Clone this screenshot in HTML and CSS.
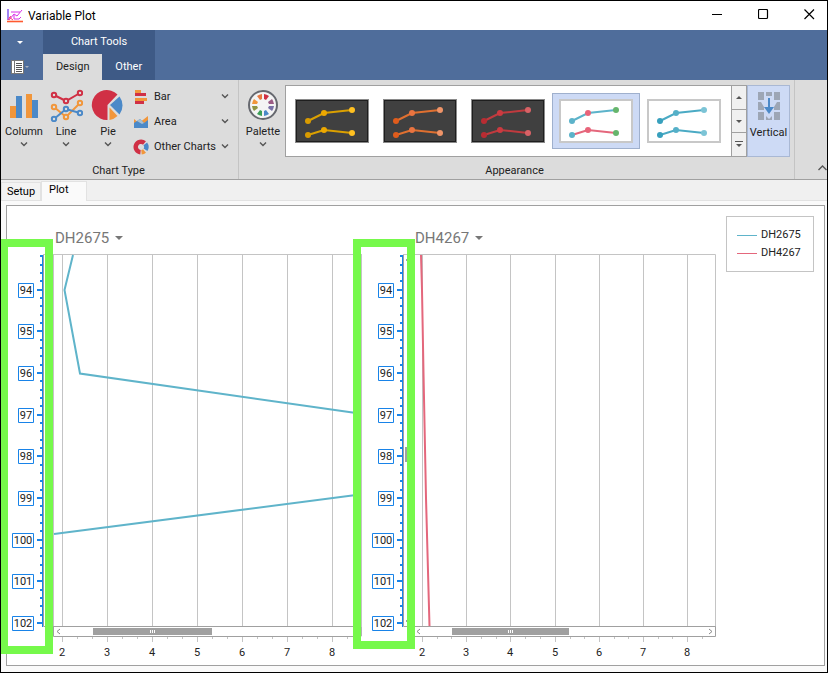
FILE: index.html
```html
<!DOCTYPE html>
<html lang="en">
<head>
<meta charset="utf-8">
<title>Variable Plot</title>
<link rel="stylesheet" href="styles.css">
</head>
<body>
<div class="window">
  <header class="titlebar">
    <svg class="app-icon" width="16" height="14" viewBox="0 0 16 14" fill="none">
      <path d="M1 0v11" stroke="#7a4ff0" stroke-width="1.4"/>
      <path d="M0 12.5h16" stroke="#ff5a30" stroke-width="1.6"/>
      <path d="M2 11L7 5l3 2 5-6M4 3h9M7 6v4h5l2-2" stroke="#d832e8"/>
      <path d="M2 8l4 3M1 11l3-4" stroke="#ff3c78"/>
    </svg>
    <h1 class="title">Variable Plot</h1>
    <div class="window-controls">
      <button aria-label="Minimize"><svg width="11" height="11"><path d="M0 5.5h10" stroke="#000"/></svg></button>
      <button aria-label="Maximize"><svg width="11" height="11"><rect x=".5" y=".5" width="9" height="9" rx="1" fill="none" stroke="#000" stroke-width="1.2"/></svg></button>
      <button aria-label="Close"><svg width="11" height="11"><path d="M.5.5l9.500 9.500M10 .5L.5 10" stroke="#000" stroke-width="1.2"/></svg></button>
    </div>
  </header>

  <nav class="ribbon-head">
    <div class="quick">
      <button aria-label="Customize"><svg width="6" height="3"><path d="M0 0h6L3 3z" fill="#fff"/></svg></button>
      <button aria-label="File menu"><svg width="19" height="14" viewBox="0 0 19 14"><rect x=".5" y=".5" width="12" height="13" fill="#fff" stroke="#777"/><path d="M3.500 1v12" stroke="#777"/><path d="M5 3.500h6M5 5.500h6M5 7.500h6M5 9.500h6M5 11.500h6" stroke="#555"/><path d="M14 6h4l-2 2z" fill="#a8b0bd"/></svg></button>
    </div>
    <div class="tools">
      <div class="tools-title">Chart Tools</div>
      <div class="tools-tabs">
        <button class="tab active">Design</button>
        <button class="tab">Other</button>
      </div>
    </div>
  </nav>

  <section class="ribbon">
    <div class="group chart-type">
      <div class="items">
        <button class="big">
          <svg width="34" height="34" viewBox="7 88 34 34"><path d="M10 106h6v12h-6zM26 94h6v24h-6z" fill="#f1963b"/><path d="M16 96h6v22h-6zM32 100h6v18h-6z" fill="#4b89c8"/></svg>
          <span>Column</span><svg class="chev" width="8" height="5"><path d="M1 .5l3 3 3-3"/></svg>
        </button>
        <button class="big">
          <svg width="34" height="34" viewBox="49 88 34 34" fill="#dcdcdc" stroke-width="2"><g stroke="#d03045"><path d="M54 95l12 6 14-8" fill="none"/><circle cx="54" cy="95" r="2.200"/><circle cx="66" cy="101" r="2.200"/><circle cx="80" cy="93" r="2.200"/></g><g stroke="#f1963b"><path d="M54 107l12 10 14-14" fill="none"/><circle cx="54" cy="107" r="2.200"/><circle cx="66" cy="117" r="2.200"/><circle cx="80" cy="103" r="2.200"/></g><g stroke="#4b89c8"><path d="M54 119l12-10 14 4" fill="none"/><circle cx="54" cy="119" r="2.200"/><circle cx="66" cy="109" r="2.200"/><circle cx="80" cy="113" r="2.200"/></g></svg>
          <span>Line</span><svg class="chev" width="8" height="5"><path d="M1 .5l3 3 3-3"/></svg>
        </button>
        <button class="big">
          <svg width="34" height="34" viewBox="91 88 34 34"><path d="M107.500 120A15 15 0 1 1 117.500 94.500L107.500 105z" fill="#d03045"/><path d="M119.500 96.500a15 15 0 0 1 0 18L110 105z" fill="#4b89c8"/><path d="M109.500 120v-12.500l8 8.500a15 15 0 0 1-8 4z" fill="#f1963b"/></svg>
          <span>Pie</span><svg class="chev" width="8" height="5"><path d="M1 .5l3 3 3-3"/></svg>
        </button>
        <div class="smalls">
          <button class="small"><svg width="16" height="16"><path d="M2 1h6v3H2zM2 9h12v3H2z" fill="#f1963b"/><path d="M2 4h11v3H2zM2 12h9v3H2z" fill="#d03045"/></svg><span>Bar</span><svg class="chev" width="8" height="5"><path d="M1 .5l3 3 3-3"/></svg></button>
          <button class="small"><svg width="16" height="16"><path d="M1 5l5 4 9-7v8H1z" fill="#f1963b"/><path d="M1 9l6-4 4 4 4-3v8H1z" fill="#4b89c8"/><path d="M4 7l3-2 4 4-2 1z" fill="#a9bfd0"/></svg><span>Area</span><svg class="chev" width="8" height="5"><path d="M1 .5l3 3 3-3"/></svg></button>
          <button class="small"><svg width="16" height="16" fill="none" stroke-width="4.500"><path d="M7.500 13.300A5.300 5.300 0 1 1 11.500 4" stroke="#d03045"/><path d="M12.300 4.800a5.300 5.300 0 0 1 .2 6" stroke="#4b89c8"/><path d="M11.500 12a5.300 5.300 0 0 1-3 1.300" stroke="#f1963b"/></svg><span>Other Charts</span><svg class="chev" width="8" height="5"><path d="M1 .5l3 3 3-3"/></svg></button>
        </div>
      </div>
      <div class="caption">Chart Type</div>
    </div>

    <div class="group appearance">
      <div class="items">
        <button class="big palette">
          <svg width="34" height="34" viewBox="-17 -17 34 34"><circle r="14" fill="#f4f4f4" stroke="#66686f" stroke-width="2"/><g><path d="M1 -6V-11A11 11 0 0 1 6 -9L3 -5z" fill="#d03045"/><path d="M5 -3L9 -6A11 11 0 0 1 11 -1H6z" fill="#9b5b85"/><path d="M6 1H11A11 11 0 0 1 9 6L5 3z" fill="#7a72a8"/><path d="M3 5L6 9A11 11 0 0 1 1 11V6z" fill="#4b89c8"/><path d="M-1 6V11A11 11 0 0 1 -6 9L-3 5z" fill="#3c9f58"/><path d="M-5 3L-9 6A11 11 0 0 1 -11 1H-6z" fill="#8f9443"/><path d="M-6 -1H-11A11 11 0 0 1 -9 -6L-5 -3z" fill="#f1963b"/><path d="M-3 -5L-6 -9A11 11 0 0 1 -1 -11V-6z" fill="#e9793f"/></g></svg>
          <span>Palette</span><svg class="chev" width="8" height="5"><path d="M1 .5l3 3 3-3"/></svg>
        </button>
        <div class="gallery">
          <div class="styles">
            <button class="style amber" aria-label="Amber dark"><svg viewBox="0 0 74 44"><rect class="edge" x=".5" y=".5" width="73" height="43"/><rect class="card dark" x="1.500" y="1.500" width="71" height="41"/><path class="ln" d="M13 22l16-8 28-3M13 36l16-5 28 3"/><g class="p1"><circle cx="13" cy="22" r="3"/><circle cx="13" cy="36" r="3"/></g><g class="p2"><circle cx="29" cy="14" r="3"/><circle cx="29" cy="31" r="3"/></g><g class="p3"><circle cx="57" cy="11" r="3"/><circle cx="57" cy="34" r="3"/></g></svg></button>
            <button class="style orange" aria-label="Orange dark"><svg viewBox="0 0 74 44"><rect class="edge" x=".5" y=".5" width="73" height="43"/><rect class="card dark" x="1.500" y="1.500" width="71" height="41"/><path class="ln" d="M13 22l16-8 28-3M13 36l16-5 28 3"/><g class="p1"><circle cx="13" cy="22" r="3"/><circle cx="13" cy="36" r="3"/></g><g class="p2"><circle cx="29" cy="14" r="3"/><circle cx="29" cy="31" r="3"/></g><g class="p3"><circle cx="57" cy="11" r="3"/><circle cx="57" cy="34" r="3"/></g></svg></button>
            <button class="style red" aria-label="Red dark"><svg viewBox="0 0 74 44"><rect class="edge" x=".5" y=".5" width="73" height="43"/><rect class="card dark" x="1.500" y="1.500" width="71" height="41"/><path class="ln" d="M13 22l16-8 28-3M13 36l16-5 28 3"/><g class="p1"><circle cx="13" cy="22" r="3"/><circle cx="13" cy="36" r="3"/></g><g class="p2"><circle cx="29" cy="14" r="3"/><circle cx="29" cy="31" r="3"/></g><g class="p3"><circle cx="57" cy="11" r="3"/><circle cx="57" cy="34" r="3"/></g></svg></button>
            <button class="style mixed selected" aria-label="Default light"><svg viewBox="0 0 74 44"><rect class="card light" x="1" y="1" width="72" height="42"/><path class="ln" d="M13 22l16-8 28-3"/><path class="ln second" d="M13 36l16-5 28 3"/><g class="p1"><circle cx="13" cy="22" r="3"/><circle cx="13" cy="36" r="3"/></g><g class="p2"><circle cx="29" cy="14" r="3"/><circle cx="29" cy="31" r="3"/></g><g class="p3"><circle cx="57" cy="11" r="3"/><circle cx="57" cy="34" r="3"/></g></svg></button>
            <button class="style blue" aria-label="Blue light"><svg viewBox="0 0 74 44"><rect class="card light" x="1" y="1" width="72" height="42"/><path class="ln" d="M13 22l16-8 28-3M13 36l16-5 28 3"/><g class="p1"><circle cx="13" cy="22" r="3"/><circle cx="13" cy="36" r="3"/></g><g class="p2"><circle cx="29" cy="14" r="3"/><circle cx="29" cy="31" r="3"/></g><g class="p3"><circle cx="57" cy="11" r="3"/><circle cx="57" cy="34" r="3"/></g></svg></button>
          </div>
          <div class="gallery-scroll">
            <button aria-label="Previous styles"><svg width="6" height="3"><path d="M0 3h6L3 0z" fill="#555"/></svg></button>
            <button aria-label="Next styles"><svg width="6" height="3"><path d="M0 0h6L3 3z" fill="#555"/></svg></button>
            <button aria-label="All styles"><svg width="8" height="7"><path d="M0 .5h8" stroke="#555"/><path d="M1 3h6L4 6z" fill="#555"/></svg></button>
          </div>
        </div>
        <button class="big vertical">
          <svg width="22" height="34" viewBox="0 0 22 34"><path d="M0 3h6v8H0zM8 3h6v4H8zM16 3h6v8h-6zM0 13h3l3 5v3H0zM19 13h3v8h-6v-3zM0 23h6v8H0zM16 23h6v8h-6zM8 27l3 3 3-3v4H8z" fill="#9da6b5"/><path d="M11 9v11" stroke="#4b89c8" stroke-width="2"/><path d="M6 18h10l-5 7z" fill="#4b89c8"/></svg>
          <span>Vertical</span>
        </button>
      </div>
      <div class="caption">Appearance</div>
    </div>
    <button class="collapse" aria-label="Collapse ribbon"><svg width="9" height="6"><path d="M.5 5l4-4 4 4" fill="none" stroke="#555" stroke-width="1.400"/></svg></button>
  </section>

  <nav class="pages">
    <button class="page-tab">Setup</button>
    <button class="page-tab current">Plot</button>
  </nav>

  <main class="page">
    <div class="chart">
      <div class="plots">
        <div class="plot-titles">
          <button class="plot-title">DH2675<svg width="8" height="4"><path d="M0 0h8L4 4z" fill="#777"/></svg></button>
          <button class="plot-title">DH4267<svg width="8" height="4"><path d="M0 0h8L4 4z" fill="#777"/></svg></button>
        </div>
        <svg class="canvas" viewBox="7 254 719 411" role="img" aria-label="Depth plots of DH2675 and DH4267">
          <g class="grid">
            <path d="M43 254.500H361M403 254.500H715.500V636M361.500 254V636M53.500 254V636"/>
            <path d="M62.500 254V626M107.500 254V626M152.500 254V626M197.500 254V626M242.500 254V626M287.500 254V626M332.500 254V626"/>
            <path d="M422.500 254V626M466.500 254V626M510.500 254V626M555.500 254V626M599.500 254V626M643.500 254V626M687.500 254V626"/>
            <path d="M62.500 637v5M107.500 637v5M152.500 637v5M197.500 637v5M242.500 637v5M287.500 637v5M332.500 637v5M422.500 637v5M466.500 637v5M510.500 637v5M555.500 637v5M599.500 637v5M643.500 637v5M687.500 637v5"/>
            <path d="M77.500 637v2M92.500 637v2M122.500 637v2M137.500 637v2M167.500 637v2M182.500 637v2M212.500 637v2M227.500 637v2M257.500 637v2M272.500 637v2M302.500 637v2M317.500 637v2M347.500 637v2M437.500 637v2M451.500 637v2M481.500 637v2M496.500 637v2M525.500 637v2M540.500 637v2M570.500 637v2M584.500 637v2M614.500 637v2M628.500 637v2M658.500 637v2M672.500 637v2M702.500 637v2"/>
          </g>
          <path class="frame" d="M43.500 255V626.500H361M403.500 255V626.500H715.500V636.500H415M53.500 627v9.500H361V627"/>
          <polyline class="series-a" points="73,255 64.500,290 80,373.500 356,413"/>
          <polyline class="series-a" points="356,495 54,534"/>
          <polyline class="series-b" points="421,255 422,290 423.500,373 426,498 429.500,626"/>
          <path class="thumb" d="M93 628h119v7H93zM452 628h117v7H452zM405 447h3v15h-3zM406 259h2v2h-2zM406 620h2v2h-2z"/>
          <path d="M150.500 630v3M152.500 630v3M154.500 630v3M508.500 630v3M510.500 630v3M512.500 630v3" stroke="#fff"/>
          <path class="arrows" d="M60 629l-3 2.500 3 2.500M420 629l-3 2.500 3 2.500M709 629l3 2.500-3 2.500"/>

          <g id="depth-axis">
            <path d="M42.500 255V627" class="axis line"/>
            <path class="axis" d="M37 290h5M37 331h5M37 373h5M37 415h5M37 456h5M37 498h5M37 540h5M37 581h5M37 623h5"/>
            <path class="axis" d="M40 256h2M40 265h2M40 273h2M40 281h2M40 298h2M40 306h2M40 315h2M40 323h2M40 340h2M40 348h2M40 356h2M40 365h2M40 381h2M40 390h2M40 398h2M40 406h2M40 423h2M40 431h2M40 440h2M40 448h2M40 465h2M40 473h2M40 481h2M40 490h2M40 506h2M40 515h2M40 523h2M40 531h2M40 548h2M40 556h2M40 565h2M40 573h2M40 590h2M40 598h2M40 606h2M40 615h2"/>
            <path class="label-box" d="M18.500 283.500h15v14h-15zM18.500 324.500h15v14h-15zM18.500 366.500h15v14h-15zM18.500 408.500h15v14h-15zM18.500 449.500h15v14h-15zM18.500 491.500h15v14h-15zM12.500 533.500h21v14h-21zM12.500 574.500h21v14h-21zM12.500 616.500h21v14h-21z"/>
            <g class="depth"><text x="26" y="294">94</text><text x="26" y="335">95</text><text x="26" y="377">96</text><text x="26" y="419">97</text><text x="26" y="460">98</text><text x="26" y="502">99</text><text x="23" y="544">100</text><text x="23" y="585">101</text><text x="23" y="627">102</text></g>
          </g>
          <use href="#depth-axis" x="360"/>
          <g class="ticks"><text x="62" y="656">2</text><text x="107" y="656">3</text><text x="152" y="656">4</text><text x="197" y="656">5</text><text x="242" y="656">6</text><text x="287" y="656">7</text><text x="332" y="656">8</text><text x="422" y="656">2</text><text x="466" y="656">3</text><text x="510" y="656">4</text><text x="555" y="656">5</text><text x="599" y="656">6</text><text x="643" y="656">7</text><text x="687" y="656">8</text></g>
          <path class="highlight" fill-rule="evenodd" d="M1 239H53V654H1zM8 247V646H45V247z"/>
          <path class="highlight" fill-rule="evenodd" d="M353 239H415V649H353zM361 247V641H407V247z"/>
        </svg>
      </div>
      <ul class="legend">
        <li class="a">DH2675</li>
        <li class="b">DH4267</li>
      </ul>
    </div>
  </main>
</div>
</body>
</html>
```
FILE: styles.css
```css
* { box-sizing: border-box; }
body {
  margin: 0;
  font: 11px/16px Roboto, "Liberation Sans", sans-serif;
  color: #222;
}
button {
  margin: 0;
  padding: 0;
  border: 0;
  background: none;
  font: inherit;
  color: inherit;
}
svg { display: block; flex: none; }
.window {
  min-height: 100vh;
  display: flex;
  flex-direction: column;
  border: 1px solid #000;
  background: #fafafa;
}

.titlebar {
  display: flex;
  align-items: center;
  height: 29px;
  padding-left: 6px;
  background: #fff;
}
.title {
  margin: 0 0 0 5px;
  font-size: 12px;
  font-weight: 400;
  color: #000;
}
.window-controls { display: flex; align-self: flex-start; margin-left: auto; }
.window-controls button {
  width: 46px;
  height: 27px;
  padding-right: 12px;
  display: grid;
  align-items: center;
  justify-items: end;
}

.ribbon-head { display: flex; height: 50px; background: #4f6d9b; color: #fff; }
.quick { width: 42px; padding-right: 4px; display: grid; grid-template-rows: 24px 26px; }
.quick button { display: grid; place-items: center; }
.tools { background: #3e5a86; min-width: 112px; }
.tools-title { height: 24px; line-height: 24px; text-align: center; }
.tools-tabs { display: flex; }
.tab { flex: 1 1 auto; height: 26px; padding: 0 12px; }
.tab.active { background: #dcdcdc; color: #222; }

.ribbon {
  display: flex;
  height: 100px;
  background: #dcdcdc;
  border-bottom: 1px solid #a0a0a0;
}
.group {
  display: flex;
  flex-direction: column;
  justify-content: space-between;
  border-right: 1px solid #c4c4c4;
}
.chart-type { width: 238px; padding-left: 2px; }
.appearance { width: 556px; padding-right: 4px; }
.items { display: flex; padding-top: 5px; }
.caption { text-align: center; }
.chart-type .caption { padding-right: 4px; }
.big {
  width: 42px;
  height: 72px;
  display: flex;
  flex-direction: column;
  align-items: center;
  padding-top: 3px;
}
.big span { margin: 2px 0; }
.chev path { fill: none; stroke: #555; stroke-width: 1.4; }
.smalls { flex: 1; margin-top: -1px; padding: 0 9px 0 4px; white-space: nowrap; }
.small { width: 100%; height: 25px; display: flex; align-items: center; gap: 5px; text-align: left; }
.small .chev { margin-left: auto; }
.palette { width: 46px; padding-left: 2px; }
.gallery { flex: 1; height: 72px; display: flex; background: #fff; border: 1px solid #a0a0a0; }
.styles { flex: 1; display: flex; align-items: center; padding-left: 2px; }
.style { width: 88px; height: 56px; display: grid; place-items: center; border: 1px solid transparent; }
.style svg { width: 74px; height: 44px; }
.style.selected { background: #cddaf5; border-color: #9fb0cd; }
.edge { fill: none; stroke: #8a8a8a; }
.card.dark { fill: #404040; stroke: #1e1e1e; }
.card.light { fill: #fff; stroke: #c8c8c8; stroke-width: 2; }
.ln { fill: none; stroke-width: 2; }
.amber .ln { stroke: #dba000; } .amber .p1 { fill: #d99b00; } .amber .p2 { fill: #eda800; } .amber .p3 { fill: #ffc020; }
.orange .ln { stroke: #e07030; } .orange .p1 { fill: #e05c1c; } .orange .p2 { fill: #ea7440; } .orange .p3 { fill: #f09468; }
.red .ln { stroke: #c03a3e; } .red .p1 { fill: #b82c32; } .red .p2 { fill: #cc3a40; } .red .p3 { fill: #d86266; }
.mixed .ln { stroke: #5cb3ca; } .mixed .second { stroke: #e4677c; } .mixed .p1 { fill: #5cb3ca; } .mixed .p2 { fill: #e8647a; } .mixed .p3 { fill: #66b56c; }
.blue .ln { stroke: #4aaac4; } .blue .p1 { fill: #38a0bd; } .blue .p2 { fill: #55b0c8; } .blue .p3 { fill: #7cc4d6; }
.gallery-scroll { width: 15px; display: flex; flex-direction: column; border-left: 1px solid #a0a0a0; background: #f0f0f0; }
.gallery-scroll button { flex: 1; display: grid; place-items: center; }
.gallery-scroll button + button { border-top: 1px solid #a0a0a0; }
.vertical { width: 43px; background: #cddaf5; border: 1px solid #a9b8d4; }
.collapse { margin: auto 0 8px auto; }

.pages {
  display: flex;
  align-items: flex-end;
  height: 21px;
  background: #f0f0f0;
  border-bottom: 1px solid #e2e2e2;
  color: #000;
}
.page-tab { height: 18px; width: 40px; border: 1px solid #e2e2e2; border-bottom: 0; background: #f3f3f3; }
.page-tab.current { height: 20px; width: 46px; margin-bottom: -1px; padding: 0 10px 3px 7px; text-align: left; background: #fafafa; }

.page { flex: 1; display: flex; padding: 4px 2px 6px 5px; }
.chart { flex: 1; display: flex; align-items: flex-start; border: 1px solid #a0a0a0; background: #fff; }
.plots { flex: 1; min-width: 0; }
.plot-titles { display: grid; grid-template-columns: 360px 1fr; height: 48px; padding: 22px 0 0 48px; }
.plot-title { justify-self: start; display: flex; align-items: center; gap: 6px; height: 20px; font-size: 15px; color: #777; }
.canvas { width: 100%; overflow: visible; }
.grid path { fill: none; stroke: #c4c4c4; }
.frame { fill: none; stroke: #a0a0a0; }
.series-a, .series-b { fill: none; stroke-width: 2; }
.series-a { stroke: #5fb4ca; }
.series-b { stroke: #e4677c; }
.thumb { fill: #a0a0a0; }
.arrows { fill: none; stroke: #888; }
.axis { stroke: #1883e8; stroke-width: 2; }
.axis.line { stroke-width: 1; }
.label-box { fill: #fff; stroke: #1883e8; }
.depth, .ticks { fill: #222; text-anchor: middle; }
.highlight { fill: #76f94b; }
.legend { margin: 10px 10px 0 0; padding: 9px 10px; width: 88px; height: 56px; border: 1px solid #c4c4c4; list-style: none; background: #fff; }
.legend li { display: flex; align-items: center; gap: 4px; height: 18px; }
.legend li::before { content: ""; width: 20px; border-top: 1px solid #5fb4ca; }
.legend .b::before { border-color: #e4677c; }
```
